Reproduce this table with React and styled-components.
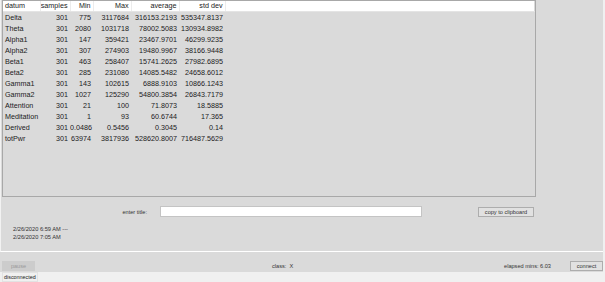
import React from 'react';
import styled, { createGlobalStyle } from 'styled-components';

const GlobalStyle = createGlobalStyle`
  html, body {
    margin: 0;
    padding: 0;
    background: #dadada;
  }
  body {
    font-family: "Liberation Sans", Arial, sans-serif;
    color: #1a1a1a;
  }
`;

const Window = styled.div`
  width: 605px;
  height: 282px;
  display: flex;
  flex-direction: column;
  background: #dadada;
  overflow: hidden;
`;

const Main = styled.div`
  flex: 1;
  display: flex;
  flex-direction: column;
  border-right: 2px solid #f0f0f0;
`;

const TopGroup = styled.div`
  height: 252px;
  box-sizing: border-box;
  border-left: 1px solid #f2f2f2;
  border-bottom: 1px solid #ffffff;
  padding-left: 1px;
  display: flex;
  flex-direction: column;
`;

const TablePanel = styled.div`
  width: 534px;
  height: 197px;
  box-sizing: border-box;
  border: 1px solid #a8a8a8;
  background: #dadada;
  overflow: hidden;
`;

const Table = styled.table`
  border-collapse: collapse;
  table-layout: fixed;
  width: 532px;
  font-size: 7.2px;
`;

const HeadRow = styled.tr`
  background: #ffffff;
  height: 10px;
`;

const HeadCell = styled.th`
  font-weight: normal;
  text-align: ${p => (p.$left ? 'left' : 'right')};
  padding: 0 ${p => p.$pr || 2}px 0 ${p => (p.$left ? 2 : 0)}px;
  border-right: 1px solid ${p => (p.$last ? 'transparent' : '#ececec')};
  border-bottom: 1px solid #e4e4e4;
  line-height: 10px;
  white-space: nowrap;
  overflow: hidden;
`;

const Row = styled.tr`
  height: 11px;
`;

const Cell = styled.td`
  text-align: ${p => (p.$left ? 'left' : 'right')};
  padding: 0 2px 0 ${p => (p.$left ? 2 : 0)}px;
  line-height: 11px;
  white-space: nowrap;
  overflow: hidden;
`;

const TitleRow = styled.div`
  display: flex;
  align-items: center;
  margin-top: 9px;
  height: 11px;
`;

const SmallLabel = styled.span`
  font-size: 5.6px;
  color: #333;
  white-space: nowrap;
`;

const TitleLabel = styled(SmallLabel)`
  width: 145px;
  text-align: right;
`;

const TitleInput = styled.input`
  margin-left: 13px;
  width: 262px;
  height: 11px;
  box-sizing: border-box;
  border: 1px solid #c4c4c4;
  background: #ffffff;
  padding: 0;
  outline: none;
`;

const Button = styled.button`
  width: ${p => p.$w}px;
  height: 10px;
  box-sizing: border-box;
  padding: 0;
  margin: 0;
  margin-left: ${p => p.$ml || 0}px;
  font-family: "Liberation Sans", Arial, sans-serif;
  font-size: 5.6px;
  line-height: 8px;
  color: ${p => (p.disabled ? '#9a9a9a' : '#333')};
  background: ${p => (p.disabled ? '#cccccc' : '#e1e1e1')};
  border: 1px solid ${p => (p.disabled ? '#cccccc' : '#adadad')};
  border-radius: 0;
`;

const Dates = styled.div`
  margin-top: 9px;
  padding-left: 11px;
  display: flex;
  flex-direction: column;
  font-size: 5.7px;
  line-height: 7.5px;
  color: #333;
`;

const Toolbar = styled.div`
  height: 20px;
  display: flex;
  align-items: flex-end;
  padding: 0 0 1px 2px;
  box-sizing: border-box;
`;

const ToolText = styled(SmallLabel)`
  line-height: 10px;
  margin-left: ${p => p.$ml || 0}px;
`;

const Spacer = styled.div`
  flex: 1;
`;

const StatusBar = styled.div`
  height: 10px;
  background: #f0f0f0;
  display: flex;
  align-items: center;
  padding-left: 2px;
`;

const StatusText = styled.span`
  font-size: 5.4px;
  color: #222;
  line-height: 8px;
  padding: 0 1px;
  border: 1px solid #e2e2e2;
`;

const columns = [
  { key: 'datum', label: 'datum', width: 37, left: true },
  { key: 'samples', label: 'samples', width: 30 },
  { key: 'min', label: 'Min', width: 23 },
  { key: 'max', label: 'Max', width: 38 },
  { key: 'avg', label: 'average', width: 48 },
  { key: 'std', label: 'std dev', width: 46 },
];

const rows = [
  ['Delta', '301', '775', '3117684', '316153.2193', '535347.8137'],
  ['Theta', '301', '2080', '1031718', '78002.5083', '130934.8982'],
  ['Alpha1', '301', '147', '359421', '23467.9701', '46299.9235'],
  ['Alpha2', '301', '307', '274903', '19480.9967', '38166.9448'],
  ['Beta1', '301', '463', '258407', '15741.2625', '27982.6895'],
  ['Beta2', '301', '285', '231080', '14085.5482', '24658.6012'],
  ['Gamma1', '301', '143', '102615', '6888.9103', '10866.1243'],
  ['Gamma2', '301', '1027', '125290', '54800.3854', '26843.7179'],
  ['Attention', '301', '21', '100', '71.8073', '18.5885'],
  ['Meditation', '301', '1', '93', '60.6744', '17.365'],
  ['Derived', '301', '0.0486', '0.5456', '0.3045', '0.14'],
  ['totPwr', '301', '63974', '3817936', '528620.8007', '716487.5629'],
];

export default function App() {
  return (
    <>
      <GlobalStyle />
      <Window>
        <Main>
          <TopGroup>
            <TablePanel>
              <Table>
                <colgroup>
                  {columns.map(c => (
                    <col key={c.key} style={{ width: c.width }} />
                  ))}
                  <col />
                </colgroup>
                <thead>
                  <HeadRow>
                    {columns.map(c => (
                      <HeadCell key={c.key} $left={c.left} $pr={c.key === 'max' ? 2 : 2}>
                        {c.label}
                      </HeadCell>
                    ))}
                    <HeadCell $last />
                  </HeadRow>
                </thead>
                <tbody>
                  {rows.map(r => (
                    <Row key={r[0]}>
                      {r.map((v, i) => (
                        <Cell key={i} $left={i === 0}>
                          {v}
                        </Cell>
                      ))}
                      <Cell />
                    </Row>
                  ))}
                </tbody>
              </Table>
            </TablePanel>

            <TitleRow>
              <TitleLabel>enter title:</TitleLabel>
              <TitleInput type="text" />
              <Button $w={56} $ml={56}>copy to clipboard</Button>
            </TitleRow>

            <Dates>
              <span>2/26/2020 6:59 AM ---</span>
              <span>2/26/2020 7:05 AM</span>
            </Dates>
          </TopGroup>

          <Toolbar>
            <Button $w={33} disabled>pause</Button>
            <ToolText $ml={237}>class:&nbsp;&nbsp;X</ToolText>
            <Spacer />
            <ToolText>elapsed mins: 6.03</ToolText>
            <Button $w={33} $ml={19}>connect</Button>
          </Toolbar>
        </Main>
        <StatusBar>
          <StatusText>disconnected</StatusText>
        </StatusBar>
      </Window>
    </>
  );
}
